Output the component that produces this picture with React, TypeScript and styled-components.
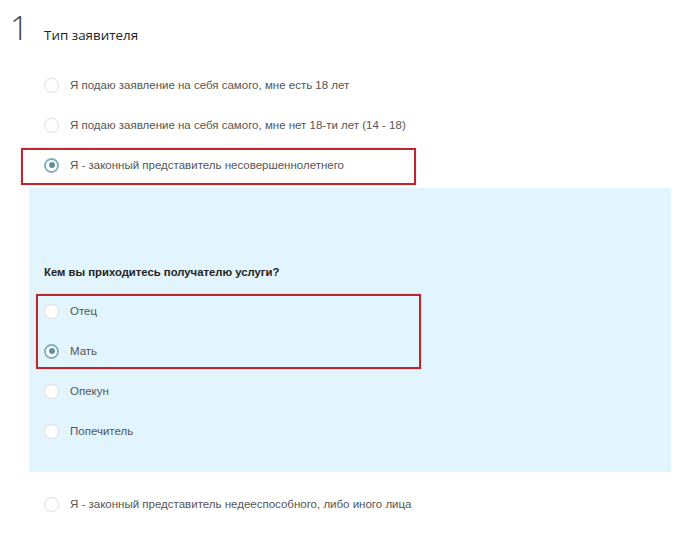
import React from 'react';
import styled, { createGlobalStyle } from 'styled-components';

const GlobalStyle = createGlobalStyle`
  html, body {
    margin: 0;
    padding: 0;
    background: #ffffff;
  }
`;

const Page = styled.div`
  width: 700px;
  height: 550px;
  box-sizing: border-box;
  padding: 10px 0 0 10px;
  overflow: hidden;
  font-family: 'Liberation Sans', Arial, sans-serif;
`;

const Header = styled.div`
  display: flex;
  align-items: baseline;
  height: 55px;
`;

const StepNumber = styled.div`
  width: 34px;
  font-family: 'Open Sans', sans-serif;
  font-weight: 300;
  font-size: 33px;
  line-height: 36px;
  color: #444;
`;

const Title = styled.div`
  font-family: 'Open Sans', sans-serif;
  font-size: 13.4px;
  color: #222;
`;

const OptionList = styled.div`
  display: flex;
  flex-direction: column;
  padding-left: 34px;
`;

const Row = styled.label`
  display: flex;
  align-items: center;
  height: 40px;
  gap: 11px;
  font-size: 11.5px;
  color: #555;
`;

const Radio = styled.span<{ $checked?: boolean }>`
  position: relative;
  width: 15px;
  height: 15px;
  box-sizing: border-box;
  border-radius: 50%;
  background: #fff;
  flex-shrink: 0;
  border: ${(p) => (p.$checked ? '2px solid #86b0ba' : '1px solid #e2e2e2')};
  box-shadow: ${(p) => (p.$checked ? 'none' : '0 0 1px rgba(0,0,0,0.08)')};

  &::after {
    content: '';
    display: ${(p) => (p.$checked ? 'block' : 'none')};
    position: absolute;
    left: 50%;
    top: 50%;
    width: 6px;
    height: 6px;
    border-radius: 50%;
    background: #5f929e;
    transform: translate(-50%, -50%);
  }
`;

const Highlight = styled.div<{ $top: number; $bottom: number; $left: number; $width: number }>`
  position: relative;

  &::after {
    content: '';
    position: absolute;
    top: ${(p) => p.$top}px;
    bottom: ${(p) => p.$bottom}px;
    left: ${(p) => p.$left}px;
    width: ${(p) => p.$width}px;
    box-sizing: border-box;
    border: 2px solid #b9272f;
    box-shadow: 0 0 1px rgba(185, 39, 47, 0.5);
    pointer-events: none;
  }
`;

const SubPanel = styled.div`
  margin: 3px 0 0 19px;
  width: 642px;
  height: 284px;
  box-sizing: border-box;
  padding: 76px 0 0 15px;
  background: #e2f4fd;
`;

const Question = styled.div`
  font-size: 11.3px;
  line-height: 16px;
  font-weight: 700;
  color: #222;
  margin-bottom: 11px;
`;

const SubList = styled.div`
  display: flex;
  flex-direction: column;
`;

const LastList = styled(OptionList)`
  margin-top: 12px;
`;

type Option = { label: string; checked?: boolean };

const Choice = ({ label, checked }: Option) => (
  <Row>
    <Radio $checked={checked} />
    {label}
  </Row>
);

const App = () => (
  <>
    <GlobalStyle />
    <Page>
      <Header>
        <StepNumber>1</StepNumber>
        <Title>Тип заявителя</Title>
      </Header>

      <OptionList>
        <Choice label="Я подаю заявление на себя самого, мне есть 18 лет" />
        <Choice label="Я подаю заявление на себя самого, мне нет 18-ти лет (14 - 18)" />
        <Highlight $top={3} $bottom={0} $left={-23} $width={395}>
          <Choice label="Я - законный представитель несовершеннолетнего" checked />
        </Highlight>
      </OptionList>

      <SubPanel>
        <Question>Кем вы приходитесь получателю услуги?</Question>
        <SubList>
          <Highlight $top={3} $bottom={2} $left={-8} $width={385}>
            <Choice label="Отец" />
            <Choice label="Мать" checked />
          </Highlight>
          <Choice label="Опекун" />
          <Choice label="Попечитель" />
        </SubList>
      </SubPanel>

      <LastList>
        <Choice label="Я - законный представитель недееспособного, либо иного лица" />
      </LastList>
    </Page>
  </>
);

export default App;
